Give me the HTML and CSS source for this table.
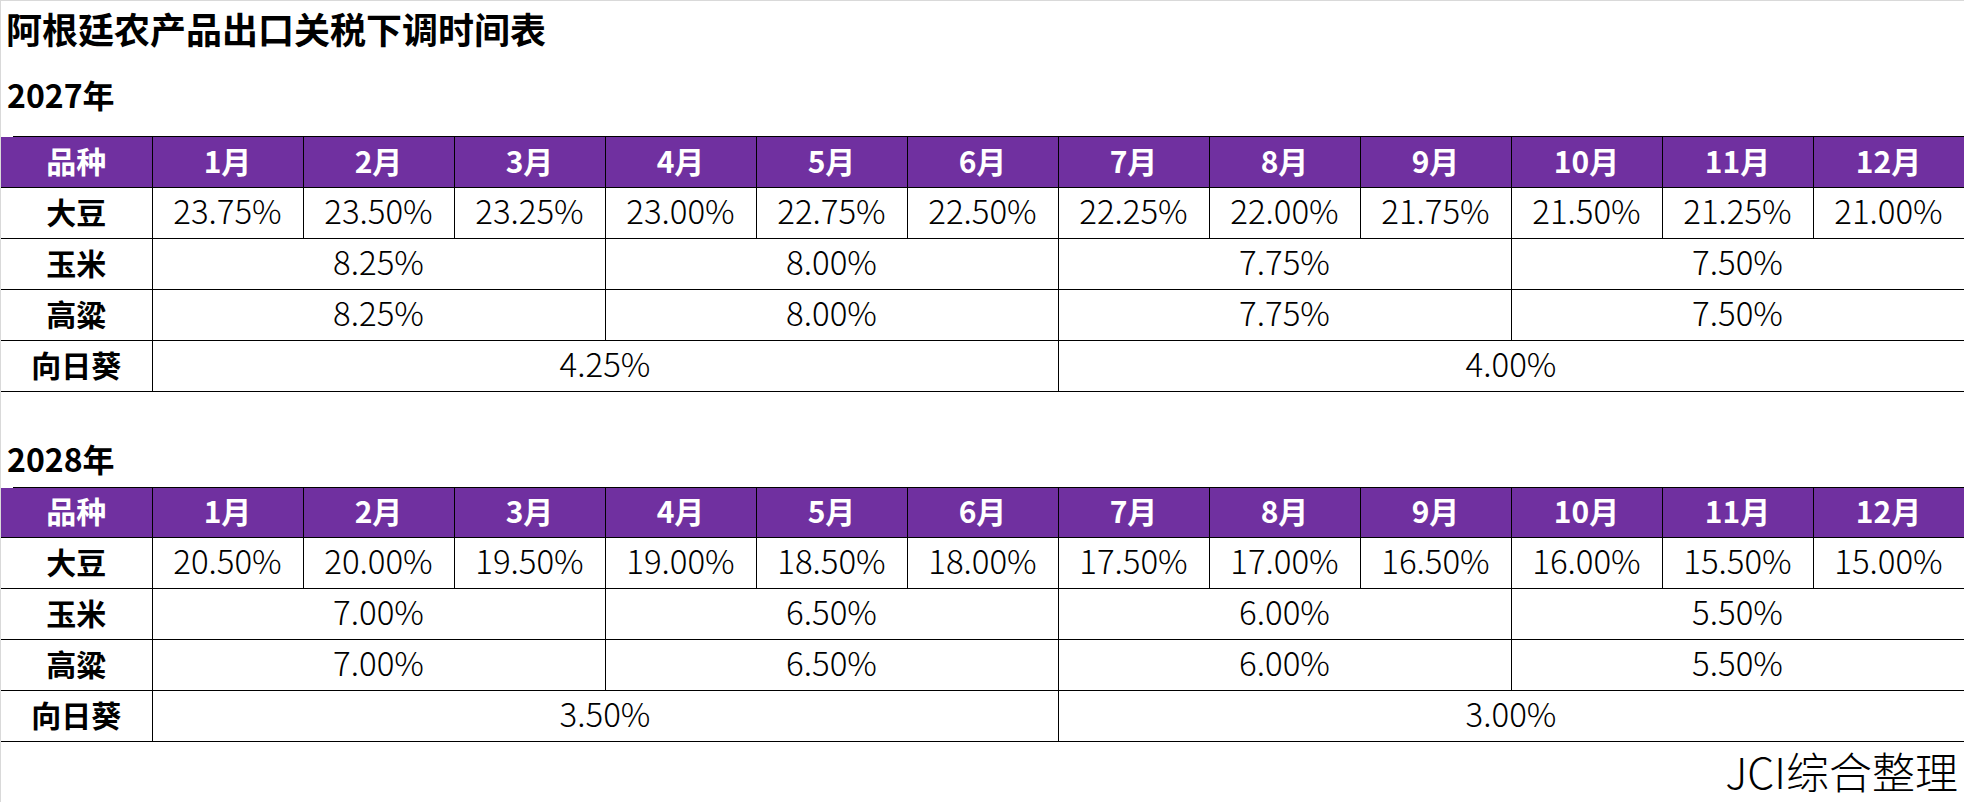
FILE: index.html
```html
<!DOCTYPE html>
<html lang="zh-CN">
<head>
<meta charset="utf-8">
<title>阿根廷农产品出口关税下调时间表</title>
<link rel="stylesheet" href="styles.css">
</head>
<body>
<div class="page">
  <div class="title">阿根廷农产品出口关税下调时间表</div>

  <div class="year">2027年</div>
  <div class="topline"></div>
  <table class="grid">
    <colgroup>
      <col><col><col><col><col><col><col><col><col><col><col><col><col>
    </colgroup>
    <thead>
      <tr><th>品种</th><th>1月</th><th>2月</th><th>3月</th><th>4月</th><th>5月</th><th>6月</th><th>7月</th><th>8月</th><th>9月</th><th>10月</th><th>11月</th><th>12月</th></tr>
    </thead>
    <tbody>
      <tr><th>大豆</th><td>23.75%</td><td>23.50%</td><td>23.25%</td><td>23.00%</td><td>22.75%</td><td>22.50%</td><td>22.25%</td><td>22.00%</td><td>21.75%</td><td>21.50%</td><td>21.25%</td><td>21.00%</td></tr>
      <tr><th>玉米</th><td colspan="3">8.25%</td><td colspan="3">8.00%</td><td colspan="3">7.75%</td><td colspan="3">7.50%</td></tr>
      <tr><th>高粱</th><td colspan="3">8.25%</td><td colspan="3">8.00%</td><td colspan="3">7.75%</td><td colspan="3">7.50%</td></tr>
      <tr><th>向日葵</th><td colspan="6">4.25%</td><td colspan="6">4.00%</td></tr>
    </tbody>
  </table>

  <div class="year year-second">2028年</div>
  <div class="topline topline-second"></div>
  <table class="grid">
    <colgroup>
      <col><col><col><col><col><col><col><col><col><col><col><col><col>
    </colgroup>
    <thead>
      <tr><th>品种</th><th>1月</th><th>2月</th><th>3月</th><th>4月</th><th>5月</th><th>6月</th><th>7月</th><th>8月</th><th>9月</th><th>10月</th><th>11月</th><th>12月</th></tr>
    </thead>
    <tbody>
      <tr><th>大豆</th><td>20.50%</td><td>20.00%</td><td>19.50%</td><td>19.00%</td><td>18.50%</td><td>18.00%</td><td>17.50%</td><td>17.00%</td><td>16.50%</td><td>16.00%</td><td>15.50%</td><td>15.00%</td></tr>
      <tr><th>玉米</th><td colspan="3">7.00%</td><td colspan="3">6.50%</td><td colspan="3">6.00%</td><td colspan="3">5.50%</td></tr>
      <tr><th>高粱</th><td colspan="3">7.00%</td><td colspan="3">6.50%</td><td colspan="3">6.00%</td><td colspan="3">5.50%</td></tr>
      <tr><th>向日葵</th><td colspan="6">3.50%</td><td colspan="6">3.00%</td></tr>
    </tbody>
  </table>

  <div class="source">JCI综合整理</div>
</div>
</body>
</html>
```

FILE: styles.css
```css
html, body {
  margin: 0;
  padding: 0;
  background: #ffffff;
}

body {
  font-family: "Noto Sans CJK SC", "Noto Sans", "Liberation Sans", sans-serif;
  color: #000000;
}

.page {
  border-left: 1px solid #d9d9d9;
  border-top: 1px solid #d9d9d9;
  height: 802px;
  box-sizing: border-box;
  overflow: hidden;
}

.title {
  font-size: 36px;
  font-weight: 700;
  line-height: 54px;
  height: 54px;
  padding-left: 5px;
  white-space: nowrap;
}

.year {
  font-size: 32px;
  font-weight: 700;
  line-height: 40px;
  height: 40px;
  margin-top: 19px;
  padding-left: 6px;
}

.year-second {
  margin-top: 46px;
}

.topline {
  height: 1px;
  background: #000000;
  margin-left: 12px;
  margin-top: 22px;
}

.topline-second {
  margin-top: 9px;
}

.grid {
  border-collapse: collapse;
  table-layout: fixed;
  width: 1963px;
}

.grid col {
  width: 151px;
}

.grid th,
.grid td {
  border: 1px solid #000000;
  padding: 0 0 4px;
  text-align: center;
  vertical-align: middle;
  line-height: 1.2;
  white-space: nowrap;
}

.grid tr > :first-child {
  border-left: none;
}

.grid thead tr {
  height: 50px;
}

.grid tbody tr {
  height: 51px;
}

.grid thead th {
  background: #7030a0;
  color: #ffffff;
  font-size: 30px;
  font-weight: 700;
  border-top: none;
}

.grid tbody th {
  font-size: 30px;
  font-weight: 700;
}

.grid td {
  font-size: 33px;
  font-weight: 300;
}

.source {
  text-align: right;
  font-size: 43px;
  font-weight: 300;
  line-height: 44px;
  margin-top: 6px;
  padding-right: 6px;
  white-space: nowrap;
}
```
